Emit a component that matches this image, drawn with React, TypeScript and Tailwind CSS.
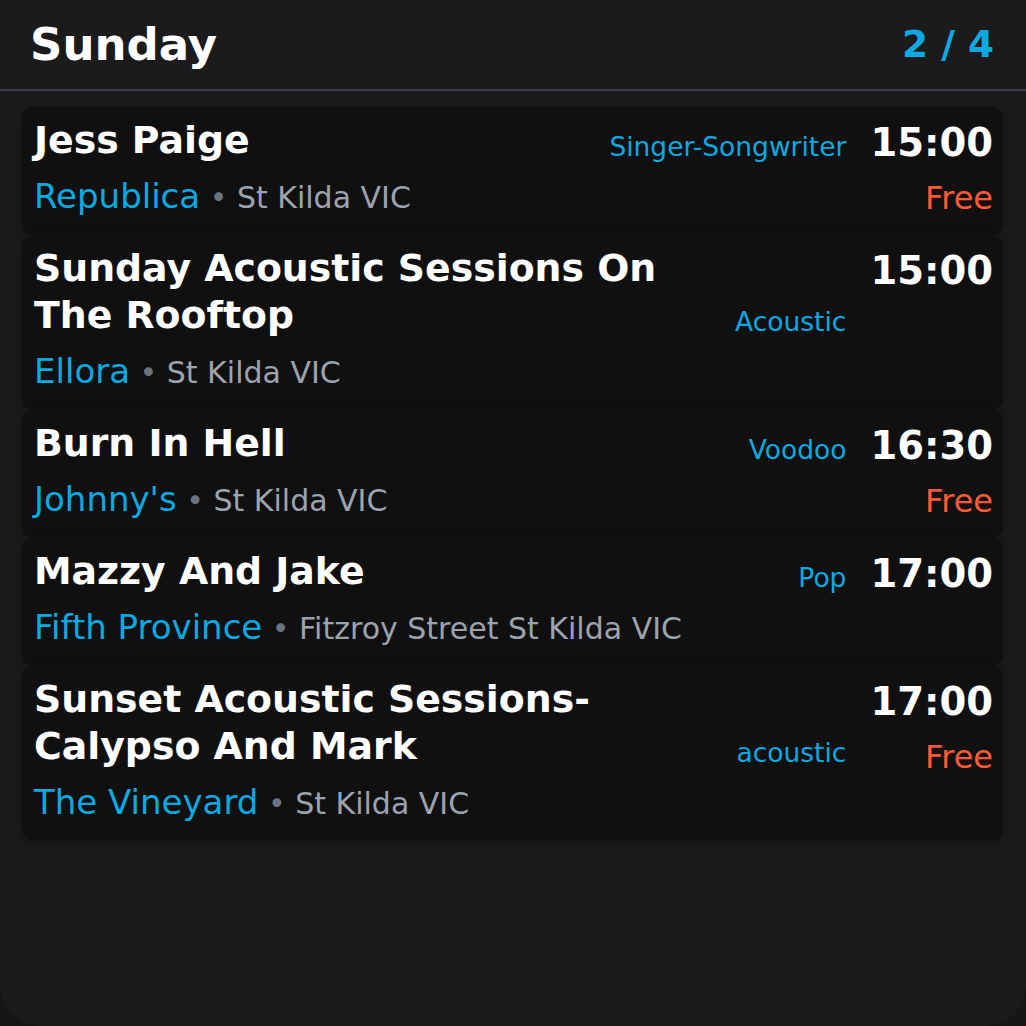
import React from "react";

type Gig = {
  title: string;
  venue: string;
  location: string;
  genre: string;
  time: string;
  free: boolean;
};

const gigs: Gig[] = [
  { title: "Jess Paige", venue: "Republica", location: "St Kilda VIC", genre: "Singer-Songwriter", time: "15:00", free: true },
  { title: "Sunday Acoustic Sessions On The Rooftop", venue: "Ellora", location: "St Kilda VIC", genre: "Acoustic", time: "15:00", free: false },
  { title: "Burn In Hell", venue: "Johnny's", location: "St Kilda VIC", genre: "Voodoo", time: "16:30", free: true },
  { title: "Mazzy And Jake", venue: "Fifth Province", location: "Fitzroy Street St Kilda VIC", genre: "Pop", time: "17:00", free: false },
  { title: "Sunset Acoustic Sessions-Calypso And Mark", venue: "The Vineyard", location: "St Kilda VIC", genre: "acoustic", time: "17:00", free: true },
];

function Card({ g }: { g: Gig }) {
  return (
    <div className="flex gap-[24px] rounded-[12px] bg-[#101010] pb-[10px] pl-[12px] pr-[10px] pt-[10px] shadow-[0_2px_10px_rgba(0,0,0,0.25)]">
      <div className="flex min-w-0 flex-1 flex-col">
        <div className="flex items-end gap-[20px]">
          <div className="min-w-0 flex-1 text-[37.8px] font-bold leading-[47px] text-white">{g.title}</div>
          <div className="shrink-0 whitespace-nowrap text-[26.5px] leading-[34px] text-[#0aa9e0]">{g.genre}</div>
        </div>
        <div className="mt-[5px] h-[56px] whitespace-nowrap text-[34px] leading-[54px]">
          <span className="text-[#0aa9e0]">{g.venue}</span>
          <span className="text-[30px] text-[#6b7280]"> • </span>
          <span className="text-[30px] text-[#9ca3af]">{g.location}</span>
        </div>
      </div>
      <div className="flex shrink-0 flex-col items-end pt-[2px]">
        <div className="text-[38.5px] font-bold leading-[47px] text-white">{g.time}</div>
        {g.free && <div className="mt-[13px] text-[32px] leading-[38px] text-[#ff5a36]">Free</div>}
      </div>
    </div>
  );
}

export default function App() {
  return (
    <div className="min-h-screen bg-[#161616]" style={{ fontFamily: '"DejaVu Sans", sans-serif' }}>
      <div className="flex h-[1026px] w-[1026px] flex-col overflow-hidden rounded-b-[40px] bg-[#1b1b1b]">
        <div className="flex h-[89px] shrink-0 items-center justify-between pl-[30px] pr-[32px]">
          <div className="text-[45px] font-bold text-white">Sunday</div>
          <div className="text-[37.5px] font-bold text-[#0aa9e0]">2 / 4</div>
        </div>
        <div className="h-[2px] shrink-0 bg-[#3a3f4a]" />
        <div className="flex flex-col pl-[22px] pr-[23px] pt-[16px]">
          {gigs.map((g, i) => (
            <Card key={i} g={g} />
          ))}
        </div>
      </div>
    </div>
  );
}
